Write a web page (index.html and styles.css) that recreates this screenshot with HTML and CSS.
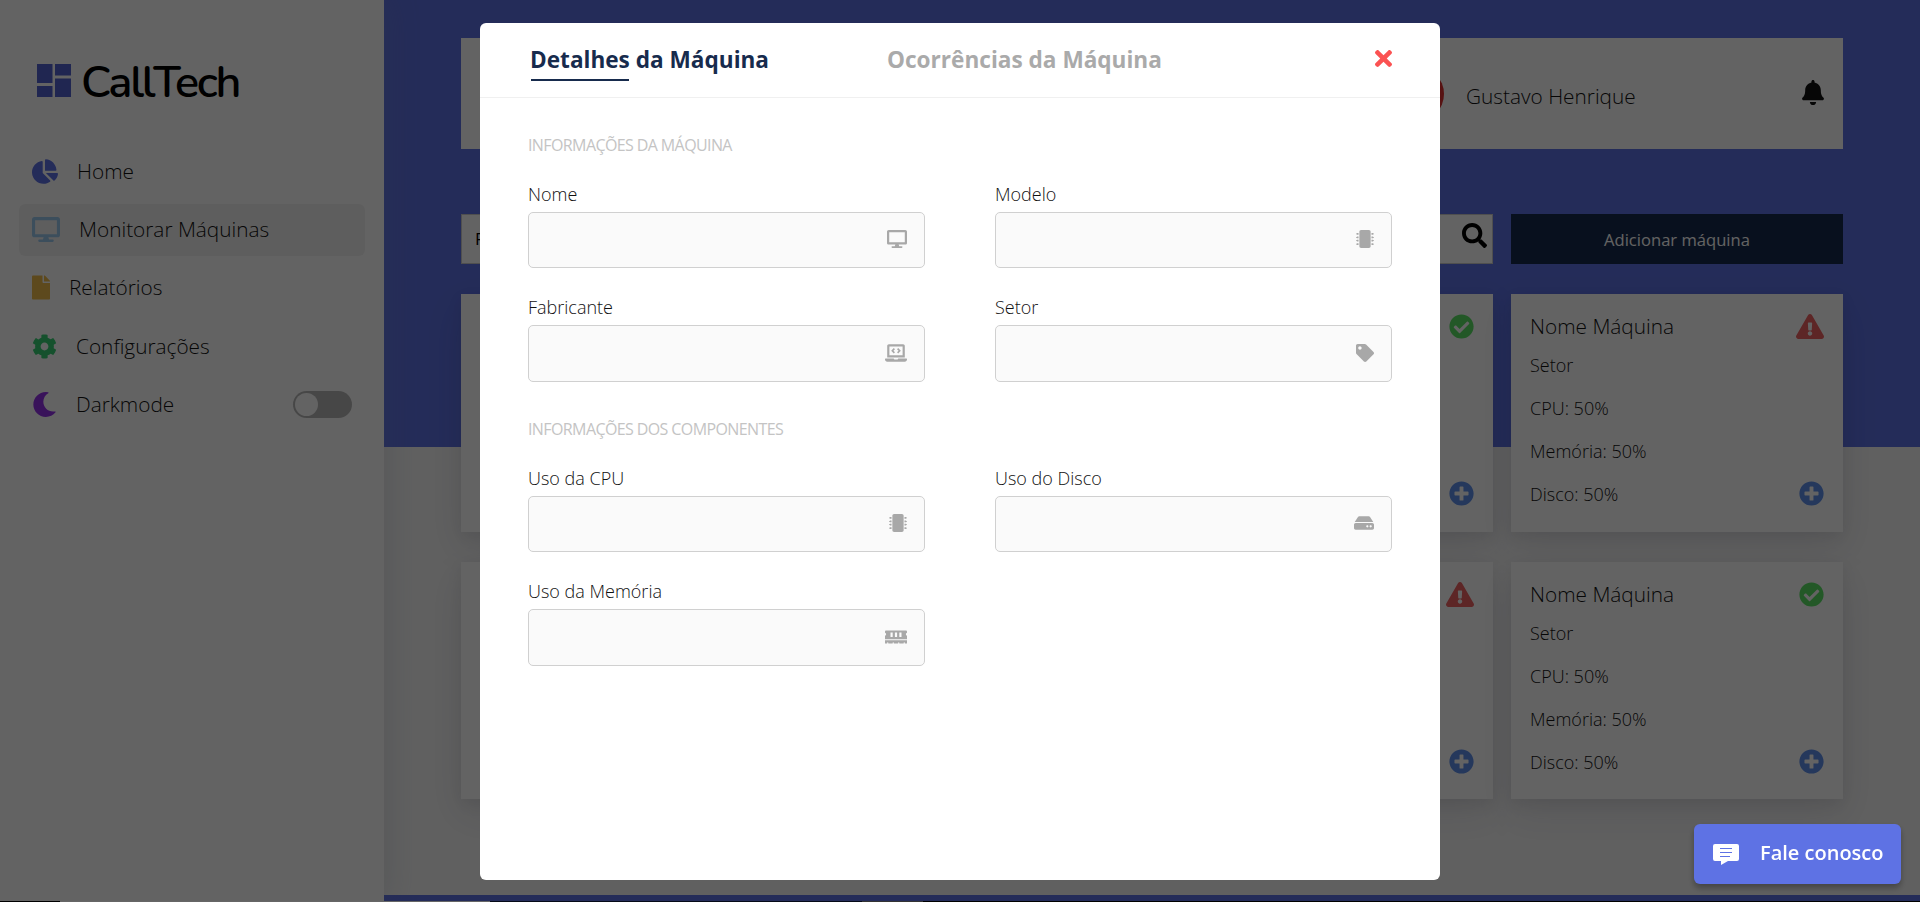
FILE: index.html
```html
<!DOCTYPE html>
<html lang="pt-BR">
<head>
<meta charset="utf-8">
<title>CallTech</title>
<link rel="stylesheet" href="styles.css">
</head>
<body>
<svg class="sprite" aria-hidden="true">
  <symbol id="pie" viewBox="0 0 544 512"><path d="M527.79 288H290.5l158.03 158.03c6.04 6.04 15.98 6.53 22.19.68 38.7-36.46 65.32-85.61 73.13-140.86 1.34-9.46-6.51-17.85-16.06-17.85zm-15.83-64.8C503.72 103.74 408.26 8.28 288.8.04 279.68-.59 272 7.1 272 16.24V240h223.77c9.14 0 16.82-7.68 16.19-16.8zM224 288V50.71c0-9.55-8.39-17.4-17.84-16.06C86.99 51.49-4.1 155.6.14 280.37 4.5 408.51 114.83 513.59 243.03 511.98c50.4-.63 96.97-16.87 135.26-44.03 7.9-5.6 8.42-17.23 1.57-24.08L224 288z"/></symbol>
  <symbol id="desktop" viewBox="0 0 576 512"><path d="M528 0H48C21.5 0 0 21.5 0 48v320c0 26.5 21.5 48 48 48h192l-16 48h-72c-13.3 0-24 10.7-24 24s10.7 24 24 24h272c13.3 0 24-10.7 24-24s-10.7-24-24-24h-72l-16-48h192c26.5 0 48-21.500 48-48V48c0-26.500-21.500-48-48-48zm-16 352H64V64h448v288z"/></symbol>
  <symbol id="file" viewBox="0 0 384 512"><path d="M224 136V0H24C10.700 0 0 10.700 0 24v464c0 13.300 10.700 24 24 24h336c13.300 0 24-10.700 24-24V160H248c-13.200 0-24-10.800-24-24zm160-14.100v6.100H256V0h6.100c6.400 0 12.500 2.500 17 7l97.900 98c4.500 4.500 7 10.600 7 16.900z"/></symbol>
  <symbol id="cog" viewBox="0 0 512 512"><path d="M487.4 315.7l-42.6-24.6c4.3-23.2 4.3-47 0-70.2l42.6-24.6c4.900-2.800 7.100-8.600 5.500-14-11.100-35.600-30-67.800-54.700-94.600-3.800-4.100-10-5.100-14.800-2.300L380.800 110c-17.900-15.400-38.500-27.300-60.800-35.100V25.800c0-5.600-3.900-10.500-9.400-11.700-36.700-8.200-74.300-7.800-109.200 0-5.500 1.200-9.400 6.100-9.400 11.700V75c-22.200 7.900-42.800 19.800-60.800 35.100L88.700 85.500c-4.900-2.800-11-1.900-14.800 2.300-24.700 26.700-43.600 58.900-54.700 94.600-1.700 5.400.6 11.200 5.500 14L67.300 221c-4.300 23.200-4.300 47 0 70.200l-42.600 24.600c-4.900 2.800-7.100 8.600-5.500 14 11.100 35.600 30 67.800 54.700 94.600 3.800 4.100 10 5.100 14.800 2.300l42.600-24.600c17.900 15.400 38.500 27.300 60.800 35.100v49.200c0 5.600 3.900 10.500 9.400 11.700 36.700 8.200 74.300 7.800 109.200 0 5.500-1.200 9.400-6.100 9.400-11.700v-49.200c22.200-7.900 42.800-19.800 60.800-35.100l42.600 24.600c4.900 2.800 11 1.900 14.800-2.300 24.700-26.700 43.600-58.900 54.700-94.600 1.500-5.500-.7-11.300-5.600-14.100zM256 336c-44.100 0-80-35.900-80-80s35.900-80 80-80 80 35.900 80 80-35.900 80-80 80z"/></symbol>
  <symbol id="moon" viewBox="0 0 512 512"><path d="M283.211 512c78.962 0 151.079-35.925 198.857-94.792 7.068-8.708-.639-21.430-11.562-19.350-124.203 23.654-238.262-71.576-238.262-196.954 0-72.222 38.662-138.635 101.498-174.394 9.686-5.512 7.250-20.197-3.756-22.230A258.156 258.156 0 0 0 283.211 0c-141.309 0-256 114.511-256 256 0 141.309 114.511 256 256 256z"/></symbol>
  <symbol id="bell" viewBox="0 0 448 512"><path d="M224 512c35.320 0 63.970-28.650 63.970-64H160.030c0 35.350 28.650 64 63.970 64zm215.390-149.710c-19.320-20.760-55.470-51.990-55.470-154.290 0-77.700-54.480-139.900-127.940-155.160V32c0-17.670-14.320-32-31.980-32s-31.980 14.330-31.980 32v20.840C118.560 68.100 64.080 130.300 64.080 208c0 102.300-36.150 133.530-55.470 154.290-6 6.450-8.660 14.160-8.610 21.710.11 16.400 12.980 32 32.100 32h383.800c19.120 0 32-15.600 32.100-32 .05-7.550-2.610-15.270-8.610-21.710z"/></symbol>
  <symbol id="search" viewBox="0 0 512 512"><path d="M505 442.700L405.300 343c-4.500-4.500-10.600-7-17-7H372c27.600-35.300 44-79.700 44-128C416 93.100 322.900 0 208 0S0 93.100 0 208s93.100 208 208 208c48.300 0 92.700-16.400 128-44v16.300c0 6.400 2.500 12.500 7 17l99.700 99.700c9.400 9.400 24.600 9.400 33.900 0l28.300-28.300c9.400-9.400 9.400-24.600.1-34zM208 336c-70.700 0-128-57.200-128-128 0-70.700 57.200-128 128-128 70.700 0 128 57.200 128 128 0 70.700-57.200 128-128 128z"/></symbol>
  <symbol id="check" viewBox="0 0 512 512"><path d="M504 256c0 136.967-111.033 248-248 248S8 392.967 8 256 119.033 8 256 8s248 111.033 248 248zM227.314 387.314l184-184c6.248-6.248 6.248-16.379 0-22.627l-22.627-22.627c-6.248-6.249-16.379-6.249-22.628 0L216 308.118l-70.059-70.059c-6.248-6.248-16.379-6.248-22.628 0l-22.627 22.627c-6.248 6.248-6.248 16.379 0 22.627l104 104c6.249 6.249 16.379 6.249 22.628.001z"/></symbol>
  <symbol id="warn" viewBox="0 0 576 512"><path d="M569.517 440.013C587.975 472.007 564.806 512 527.940 512H48.054c-36.937 0-59.999-40.055-41.577-71.987L246.423 23.985c18.467-32.009 64.720-31.951 83.154 0l239.940 416.028zM288 354c-25.405 0-46 20.595-46 46s20.595 46 46 46 46-20.595 46-46-20.595-46-46-46zm-43.673-165.346l7.418 136c.347 6.364 5.609 11.346 11.982 11.346h48.546c6.373 0 11.635-4.982 11.982-11.346l7.418-136c.375-6.874-5.098-12.654-11.982-12.654h-63.383c-6.884 0-12.356 5.780-11.981 12.654z"/></symbol>
  <symbol id="plus" viewBox="0 0 512 512"><path d="M256 8C119 8 8 119 8 256s111 248 248 248 248-111 248-248S393 8 256 8zm144 276c0 6.600-5.400 12-12 12h-92v92c0 6.600-5.400 12-12 12h-56c-6.600 0-12-5.400-12-12v-92h-92c-6.600 0-12-5.400-12-12v-56c0-6.600 5.400-12 12-12h92v-92c0-6.600 5.400-12 12-12h56c6.600 0 12 5.400 12 12v92h92c6.600 0 12 5.400 12 12v56z"/></symbol>
  <symbol id="times" viewBox="0 0 352 352"><path d="M242.720 176l100.070-100.070c12.280-12.280 12.280-32.190 0-44.480l-22.240-22.240c-12.280-12.280-32.190-12.280-44.480 0L176 109.280 75.930 9.210c-12.280-12.280-32.190-12.280-44.480 0L9.210 31.450c-12.280 12.280-12.280 32.190 0 44.480L109.280 176 9.210 276.070c-12.280 12.280-12.280 32.190 0 44.480l22.240 22.240c12.280 12.280 32.200 12.280 44.480 0L176 242.720l100.070 100.070c12.280 12.280 32.200 12.280 44.480 0l22.240-22.240c12.280-12.280 12.280-32.190 0-44.480L242.720 176z"/></symbol>
  <symbol id="chip" viewBox="0 0 512 512"><path d="M416 48v416c0 26.510-21.490 48-48 48H144c-26.510 0-48-21.490-48-48V48c0-26.510 21.490-48 48-48h224c26.510 0 48 21.490 48 48zm96 58v12a6 6 0 0 1-6 6h-18v6a6 6 0 0 1-6 6h-42V88h42a6 6 0 0 1 6 6v6h18a6 6 0 0 1 6 6zm0 96v12a6 6 0 0 1-6 6h-18v6a6 6 0 0 1-6 6h-42v-48h42a6 6 0 0 1 6 6v6h18a6 6 0 0 1 6 6zm0 96v12a6 6 0 0 1-6 6h-18v6a6 6 0 0 1-6 6h-42v-48h42a6 6 0 0 1 6 6v6h18a6 6 0 0 1 6 6zm0 96v12a6 6 0 0 1-6 6h-18v6a6 6 0 0 1-6 6h-42v-48h42a6 6 0 0 1 6 6v6h18a6 6 0 0 1 6 6zM30 376h42v48H30a6 6 0 0 1-6-6v-6H6a6 6 0 0 1-6-6v-12a6 6 0 0 1 6-6h18v-6a6 6 0 0 1 6-6zm0-96h42v48H30a6 6 0 0 1-6-6v-6H6a6 6 0 0 1-6-6v-12a6 6 0 0 1 6-6h18v-6a6 6 0 0 1 6-6zm0-96h42v48H30a6 6 0 0 1-6-6v-6H6a6 6 0 0 1-6-6v-12a6 6 0 0 1 6-6h18v-6a6 6 0 0 1 6-6zm0-96h42v48H30a6 6 0 0 1-6-6v-6H6a6 6 0 0 1-6-6v-12a6 6 0 0 1 6-6h18v-6a6 6 0 0 1 6-6z"/></symbol>
  <symbol id="tag" viewBox="0 0 512 512"><path d="M0 252.118V48C0 21.490 21.490 0 48 0h204.118a48 48 0 0 1 33.941 14.059l211.882 211.882c18.745 18.745 18.745 49.137 0 67.882L293.823 497.941c-18.745 18.745-49.137 18.745-67.882 0L14.059 286.059A48 48 0 0 1 0 252.118zM112 64c-26.510 0-48 21.490-48 48s21.490 48 48 48 48-21.490 48-48-21.490-48-48-48z"/></symbol>
  <symbol id="hdd" viewBox="0 0 576 384"><path d="M576 240v96c0 26.510-21.490 48-48 48H48c-26.510 0-48-21.490-48-48v-96c0-26.510 21.490-48 48-48h480c26.510 0 48 21.490 48 48zM528 160a79.600 79.600 0 0 1 27.200 4.780L462.250 21.380A48 48 0 0 0 422.310 0H153.690a48 48 0 0 0-39.940 21.380L20.800 164.780A79.600 79.600 0 0 1 48 160h480zm-48 96c-17.673 0-32 14.327-32 32s14.327 32 32 32 32-14.327 32-32-14.327-32-32-32zm-96 0c-17.673 0-32 14.327-32 32s14.327 32 32 32 32-14.327 32-32-14.327-32-32-32z"/></symbol>
  <symbol id="memory" viewBox="0 0 640 384"><path fill-rule="evenodd" d="M640 67V32c0-17.700-14.300-32-32-32H32C14.300 0 0 14.300 0 32v35c18.600 6.600 32 24.200 32 45s-13.400 38.400-32 45v99h640v-99c-18.600-6.600-32-24.200-32-45s13.400-38.400 32-45zM160 64h64v128h-64zm128 0h64v128h-64zm128 0h64v128h-64zM0 384h64v-26a16 16 0 0 1 32 0v26h128v-26a16 16 0 0 1 32 0v26h128v-26a16 16 0 0 1 32 0v26h128v-26a16 16 0 0 1 32 0v26h64v-96H0z"/></symbol>
  <symbol id="laptop" viewBox="0 0 640 512"><path fill-rule="evenodd" d="M112 0h416c26.400 0 48 21.600 48 48v336H64V48c0-26.400 21.600-48 48-48zm16 64v256h384V64zM256 114l34 34-44 44 44 44-34 34-76-78zm128 0l-34 34 44 44-44 44 34 34 76-78zM16 416h241c1 18 14 32 34 32h59c19 0 32-12 32-32h242a16 16 0 0 1 16 16v16c0 35-29 64-64 64H64c-35 0-64-29-64-64v-16a16 16 0 0 1 16-16z"/></symbol>
  <symbol id="chat" viewBox="0 0 26 21"><path fill-rule="evenodd" d="M2 0h22a2 2 0 0 1 2 2v13a2 2 0 0 1-2 2H15L8 21v-4H2a2 2 0 0 1-2-2V2a2 2 0 0 1 2-2zM7 4v1h12V4zm0 4v1h12V8zm0 4v1h10v-1z"/></symbol>
</svg>

<div class="app">
  <aside class="sidebar">
    <div class="logo">
      <svg class="logo-mark" viewBox="0 0 34 33"><path d="M0 0h15.500v19H0zM18 0h16v11.500H18zM0 22h15.500v11H0zM18 14.500h16V33H18z"/></svg>
      <span class="logo-text">CallTech</span>
    </div>
    <nav class="nav">
      <a class="nav-item"><svg class="w26 c-blue"><use href="#pie"/></svg><span>Home</span></a>
      <a class="nav-item active"><svg class="w28 c-sky"><use href="#desktop"/></svg><span>Monitorar Máquinas</span></a>
      <a class="nav-item"><svg class="w18 c-gold"><use href="#file"/></svg><span>Relatórios</span></a>
      <a class="nav-item"><svg class="w25 c-green"><use href="#cog"/></svg><span>Configurações</span></a>
      <a class="nav-item"><svg class="w25 c-purple"><use href="#moon"/></svg><span>Darkmode</span><i class="toggle"></i></a>
    </nav>
  </aside>
  <main class="main">
    <header class="topbar">
      <i class="avatar"></i>
      <span class="user">Gustavo Henrique</span>
      <svg class="bell"><use href="#bell"/></svg>
    </header>
    <div class="tools">
      <div class="search"><span>Pesquisar</span><svg class="w25"><use href="#search"/></svg></div>
      <button class="add">Adicionar máquina</button>
    </div>
    <section class="grid">
      <article class="card"></article>
      <article class="card"></article>
      <article class="card"><div class="side"><svg class="w25 c-ok"><use href="#check"/></svg><svg class="w25 c-plus"><use href="#plus"/></svg></div></article>
      <article class="card">
        <div class="info"><h3>Nome Máquina</h3><p>Setor</p><p>CPU: 50%</p><p>Memória: 50%</p><p>Disco: 50%</p></div>
        <div class="side"><svg class="w28 c-warn"><use href="#warn"/></svg><svg class="w25 c-plus"><use href="#plus"/></svg></div>
      </article>
      <article class="card"></article>
      <article class="card"></article>
      <article class="card"><div class="side"><svg class="w28 c-warn"><use href="#warn"/></svg><svg class="w25 c-plus"><use href="#plus"/></svg></div></article>
      <article class="card">
        <div class="info"><h3>Nome Máquina</h3><p>Setor</p><p>CPU: 50%</p><p>Memória: 50%</p><p>Disco: 50%</p></div>
        <div class="side"><svg class="w25 c-ok"><use href="#check"/></svg><svg class="w25 c-plus"><use href="#plus"/></svg></div>
      </article>
    </section>
    <footer class="bottom"></footer>
  </main>
</div>

<div class="overlay">
  <section class="modal">
    <header class="modal-head">
      <h2 class="tab on">Detalhes da Máquina</h2>
      <h2 class="tab">Ocorrências da Máquina</h2>
      <svg class="close"><use href="#times"/></svg>
    </header>
    <div class="modal-body">
      <h4>INFORMAÇÕES DA MÁQUINA</h4>
      <div class="fields">
        <label>Nome<span class="input"><svg class="i20"><use href="#desktop"/></svg></span></label>
        <label>Modelo<span class="input"><svg class="i18"><use href="#chip"/></svg></span></label>
        <label>Fabricante<span class="input tall"><svg class="i22"><use href="#laptop"/></svg></span></label>
        <label>Setor<span class="input tall"><svg class="i18"><use href="#tag"/></svg></span></label>
      </div>
      <h4 class="second">INFORMAÇÕES DOS COMPONENTES</h4>
      <div class="fields">
        <label>Uso da CPU<span class="input"><svg class="i18"><use href="#chip"/></svg></span></label>
        <label>Uso do Disco<span class="input"><svg class="i20"><use href="#hdd"/></svg></span></label>
        <label>Uso da Memória<span class="input tall"><svg class="i22"><use href="#memory"/></svg></span></label>
      </div>
    </div>
  </section>
</div>
<button class="contact"><svg><use href="#chat"/></svg><span>Fale conosco</span></button>
<div class="edge"></div>
</body>
</html>
```
FILE: styles.css
```css
* { box-sizing: border-box; margin: 0; padding: 0; }
body { width: 1920px; height: 902px; overflow: hidden; font-family: "Open Sans", sans-serif; font-weight: 300; color: #111; }
svg { display: block; fill: currentColor; flex: none; }
button { border: 0; font-family: inherit; }
.sprite { position: absolute; width: 0; height: 0; }
.w18 { width: 18px; height: 25px; }
.w25 { width: 25px; height: 25px; }
.w26 { width: 26px; height: 25px; }
.w28 { width: 28px; height: 25px; }
.c-blue { color: #5e72e4; }
.c-sky { color: #9bc8ee; }
.c-gold { color: #f0bc4c; }
.c-green { color: #36d074; }
.c-purple { color: #9432e8; }
.c-ok { color: #5be266; }
.c-warn { color: #f06262; }
.c-plus { color: #5f90ec; }

.app { display: flex; height: 902px; }
.sidebar { width: 384px; padding: 64px 19px 0; background: #fff; box-shadow: 0 0 32px rgba(136,152,170,.25); position: relative; z-index: 1; }
.logo { display: flex; align-items: center; gap: 10px; height: 33px; padding-left: 18px; }
.logo-mark { width: 34px; height: 33px; color: #5263d0; }
.logo-text { font-family: "Nunito", "Noto Sans", sans-serif; font-weight: 600; font-size: 45px; letter-spacing: -2.300px; line-height: 33px; padding-top: 3px; color: #000; }
.nav { display: flex; flex-direction: column; gap: 6.200px; margin-top: 49px; }
.nav-item { display: flex; align-items: center; gap: 19px; height: 52px; padding: 0 13px; border-radius: 6px; font-size: 20.800px; }
.nav-item span { margin-top: -2px; }
.nav-item svg { margin-top: -1px; }
.active { background: #f3f3f3; }
.toggle { display: flex; align-items: center; width: 59px; height: 27px; margin: -1px 0 0 auto; padding: 2px; border-radius: 14px; background: #b8b8b8; }
.toggle::before { content: ""; width: 23px; height: 23px; border-radius: 50%; background: #fff; }

.main { flex: 1; display: flex; flex-direction: column; padding: 38px 77px 0; background: linear-gradient(#5e72e4 447px, #f7f7f7 447px); }
.topbar { display: flex; align-items: center; height: 111px; padding: 0 19px; background: #fff; }
.avatar { width: 56px; height: 56px; margin-left: 908px; border-radius: 50%; background: #e03030; }
.user { margin: 5px 0 0 22px; font-size: 20.800px; }
.bell { width: 22px; height: 25px; margin: -3px 0 0 auto; }
.tools { display: flex; gap: 18px; height: 50px; margin-top: 65px; }
.search { display: flex; justify-content: space-between; width: 1032px; padding: 8px 5px 0 13px; background: #fff; border: 1px solid #ccc; font-size: 17px; font-weight: 400; line-height: 32px; color: #000; }
.add { flex: 1; background: #172b4d; color: #fff; font-size: 16.600px; font-weight: 400; }
.grid { display: grid; grid-template-columns: repeat(4, 332px); grid-template-rows: 238px 237px; gap: 30px 18px; margin-top: 30px; }
.card { display: flex; padding: 16px 19px 0; background: #fff; box-shadow: 0 15px 35px rgba(50,50,93,.1), 0 5px 15px rgba(0,0,0,.07); }
.info { margin-top: -1px; }
.card h3 { font-size: 20.800px; font-weight: 300; line-height: 34px; }
.card p { font-size: 18px; line-height: 24px; margin: 0 0 19px; }
.card h3 + p { margin-top: 10px; }
.side { display: flex; flex-direction: column; align-items: flex-end; justify-content: space-between; height: 200px; margin-left: auto; padding: 4px 0; }
.bottom { height: 7px; margin: auto -77px 0; background: #5e72e4; }

.overlay { position: fixed; inset: 0; z-index: 2; padding-top: 23px; background: rgba(0,0,0,.61); }
.modal { width: 960px; height: 857px; margin: 0 auto; background: #fff; border-radius: 6px; }
.modal-head { display: flex; height: 75px; padding: 22px 48px 0 50px; border-bottom: 1px solid #f0f0f0; }
.tab { width: 357px; font-size: 22.600px; line-height: 30px; font-weight: 700; color: #aaa; white-space: nowrap; }
.on { color: #172b4d; }
.on::after { content: ""; display: block; width: 98px; height: 2px; margin: 4px 0 0 1px; background: #172b4d; }
.close { width: 17px; height: 17px; margin: 5px 0 0 auto; color: #fb5252; }
.modal-body { padding: 35px 48px 0; }
h4 { height: 24px; font-size: 16px; line-height: 24px; font-weight: 400; letter-spacing: -.6px; color: #c4c4c4; }
.second { margin-top: 35px; }
.fields { display: grid; grid-template-columns: 397px 397px; gap: 27px 70px; margin-top: 25px; }
label { font-size: 18px; line-height: 24px; }
.input { display: flex; align-items: center; justify-content: flex-end; height: 56px; margin-top: 6px; padding: 0 17px 2px; background: #fafafa; border: 1px solid #d0d0d0; border-radius: 5px; color: #a8a8a8; }
.tall { height: 57px; }
.i18 { width: 18px; height: 18px; }
.i20 { width: 20px; height: 18px; }
.i22 { width: 22px; height: 18px; }

.contact { position: fixed; z-index: 3; left: 1694px; top: 824px; display: flex; align-items: center; gap: 21px; width: 207px; height: 60px; padding: 0 19px 3px; border-radius: 6px; background: #5e72e4; color: #fff; font-size: 20px; font-weight: 600; white-space: nowrap; box-shadow: 0 4px 6px rgba(0,0,0,.3); }
.contact svg { width: 26px; height: 21px; margin-top: 4px; }
.edge { position: fixed; z-index: 4; left: 0; bottom: 0; width: 1920px; height: 1px; background: linear-gradient(90deg, #000 60px, #666 60px, #666 490px, #050a18 490px, #050a18 862px, #333 862px, #333 923px, #000 923px); }
```
